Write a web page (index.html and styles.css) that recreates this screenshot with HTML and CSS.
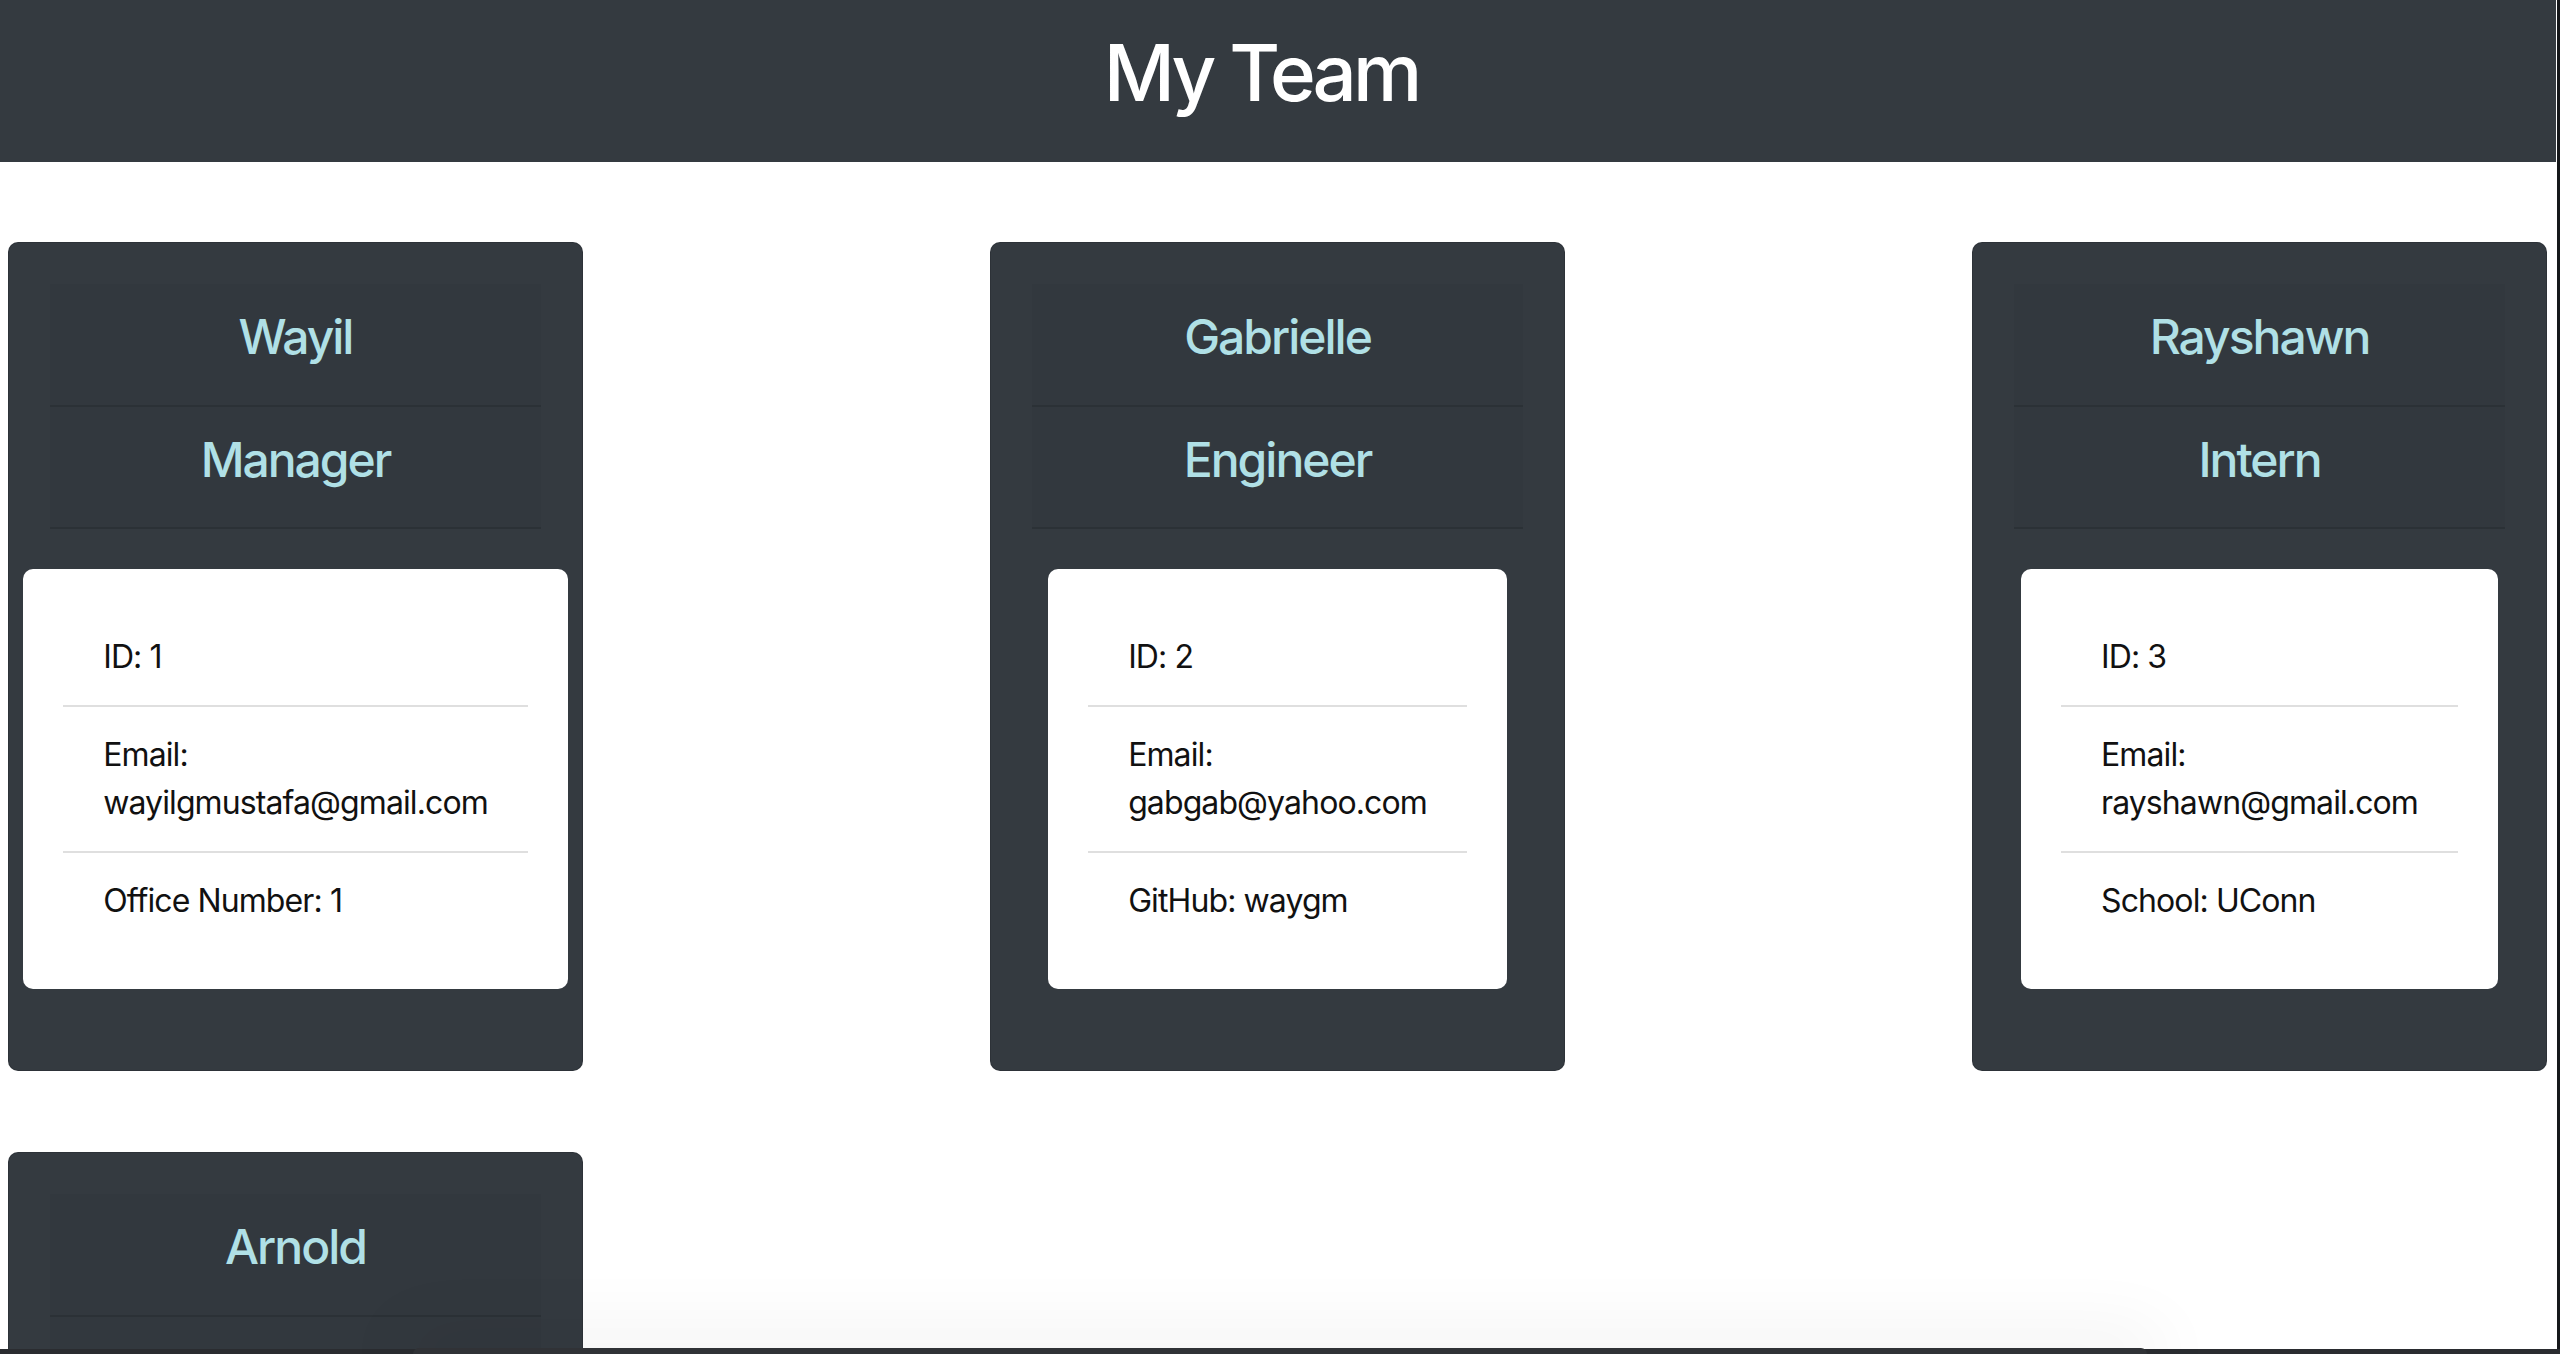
FILE: index.html
```html
<!DOCTYPE html>
<html lang="en">
<head>
<meta charset="utf-8">
<title>My Team</title>
<link rel="stylesheet" href="styles.css">
</head>
<body>
<header class="topbar">
  <h1 class="topbar-title">My Team</h1>
</header>

<main class="team">
  <section class="card">
    <div class="card-header"><h4 class="card-title">Wayil</h4></div>
    <div class="card-header"><h4 class="card-title">Manager</h4></div>
    <ul class="info">
      <li class="info-item">ID: 1</li>
      <li class="info-item">Email:<br>wayilgmustafa@gmail.com</li>
      <li class="info-item">Office Number: 1</li>
    </ul>
  </section>

  <section class="card">
    <div class="card-header"><h4 class="card-title">Gabrielle</h4></div>
    <div class="card-header"><h4 class="card-title">Engineer</h4></div>
    <ul class="info">
      <li class="info-item">ID: 2</li>
      <li class="info-item">Email:<br>gabgab@yahoo.com</li>
      <li class="info-item">GitHub: waygm</li>
    </ul>
  </section>

  <section class="card">
    <div class="card-header"><h4 class="card-title">Rayshawn</h4></div>
    <div class="card-header"><h4 class="card-title">Intern</h4></div>
    <ul class="info">
      <li class="info-item">ID: 3</li>
      <li class="info-item">Email:<br>rayshawn@gmail.com</li>
      <li class="info-item">School: UConn</li>
    </ul>
  </section>

  <section class="card">
    <div class="card-header"><h4 class="card-title">Arnold</h4></div>
    <div class="card-header"><h4 class="card-title">Intern</h4></div>
  </section>
</main>

<div class="frame-right"></div>
<div class="frame-bottom"></div>
<div class="dock"></div>
</body>
</html>
```

FILE: styles.css
```css
html, body {
  margin: 0;
  padding: 0;
  background: #ffffff;
}

body {
  font-family: "Inter", "Liberation Sans", sans-serif;
  color: #000000;
  overflow: hidden;
  height: 1354px;
}

.topbar {
  box-sizing: border-box;
  height: 162px;
  width: 2556px;
  background: #343a40;
  padding: 25px 34px 25px 0;
  text-align: center;
}

.topbar-title {
  margin: 0 0 16px;
  font-size: 78px;
  line-height: 96px;
  font-weight: 500;
  color: #ffffff;
  letter-spacing: -4px;
}

.team {
  display: grid;
  grid-template-columns: repeat(3, 575px);
  justify-content: space-between;
  align-items: start;
  row-gap: 81px;
  padding: 80px 13px 0 8px;
}

.card {
  box-sizing: border-box;
  width: 575px;
  background: #343a40;
  border: 1px solid rgba(0, 0, 0, 0.125);
  border-radius: 10px;
  padding: 41px 41px 81px;
  display: flex;
  flex-direction: column;
  align-items: stretch;
}

.card-header {
  background: rgba(0, 0, 0, 0.03);
  border-bottom: 2px solid rgba(0, 0, 0, 0.125);
  padding: 24px 40px 23px;
  text-align: center;
}

.card-title {
  margin: 0 0 16px;
  font-size: 48px;
  line-height: 57.6px;
  font-weight: 500;
  color: #b0e0e6;
  letter-spacing: -2px;
}

.info {
  list-style: none;
  margin: 40px 0 0;
  padding: 40px;
  background: #ffffff;
  border-radius: 10px;
  align-self: center;
  width: max-content;
}

.info-item {
  padding: 24px 40px;
  font-size: 32px;
  line-height: 48px;
  font-weight: 400;
  color: #111111;
  letter-spacing: -0.9px;
}

.info-item + .info-item {
  border-top: 2px solid #dfdfdf;
}

.frame-right {
  position: fixed;
  top: 0;
  right: 0;
  width: 3px;
  height: 100%;
  background: #16181b;
}

.frame-bottom {
  position: fixed;
  left: 0;
  bottom: 0;
  width: 100%;
  height: 5px;
  background: #2a2c30;
}

.dock {
  position: fixed;
  left: 413px;
  right: 413px;
  bottom: 0;
  height: 6px;
  background: #303236;
  border-radius: 6px 6px 0 0;
  box-shadow: 0 0 70px 15px rgba(0, 0, 0, 0.07);
}
```
